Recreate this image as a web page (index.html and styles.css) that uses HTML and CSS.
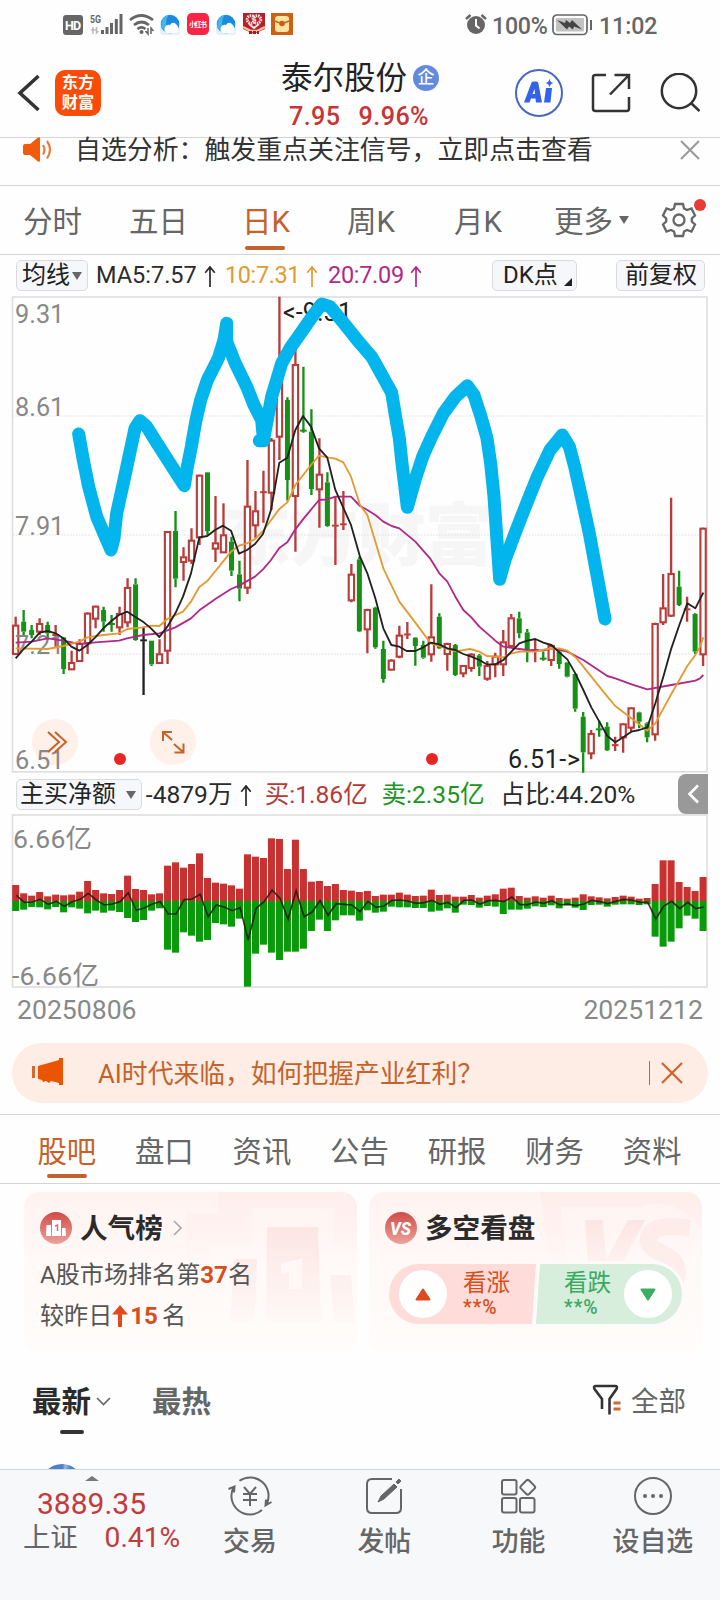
FILE: index.html
```html
<!DOCTYPE html>
<html lang="zh-CN">
<head>
<meta charset="utf-8">
<title>泰尔股份</title>
<link rel="stylesheet" href="styles.css">
</head>
<body>
<div class="app">
  <div class="status">
    <svg class="status-icons" width="240" height="30" viewBox="60 10 240 30">
      <rect x="63" y="15" width="20" height="20" rx="3" fill="#666"/>
      <text x="65" y="29.500" font-size="12.500" font-weight="700" fill="#fff" textLength="16">HD</text>
      <text x="90" y="22.500" font-size="11.500" font-weight="700" fill="#666" textLength="11" lengthAdjust="spacingAndGlyphs">5G</text>
      <path d="M91 30h5M93 27v7M96.500 27v6l2-2" stroke="#bbb" stroke-width="1.500" fill="none"/>
      <g stroke="#666" stroke-width="3"><path d="M102.500 30v4M107 27v7M111.500 23v11M116.300 19v15M121 14v20"/></g>
      <g fill="none" stroke="#666" stroke-width="2.800"><path d="M130 20q11-9 23 0M134 25q7.500-6 15 0M137.500 29q4-3.200 8 0"/></g>
      <circle cx="141.500" cy="32" r="2" fill="#666"/><path d="M148 28v6l-2.500-3M151 34v-6l2.500 3" stroke="#666" stroke-width="1.500" fill="none"/>
      <g id="cloud"><rect x="160" y="24" width="20" height="11" rx="3" fill="#e7f0f8"/><circle cx="170" cy="24" r="9.300" fill="#198be0"/><path d="M161.500 28q-2-10 7-13q-5 8 0 16z" fill="#44b5ef"/><path d="M167 33q-4-2-2-6q2-3 5-2q2-4 6-1q3 3 2 6q1 2-1 3z" fill="#fff"/></g>
      <rect x="187" y="13" width="22" height="22" rx="5" fill="#fb2444"/><text x="189" y="27" font-size="7" font-weight="700" fill="#fff" textLength="18">小红书</text>
      <use href="#cloud" x="56"/>
      <path d="M243 13h22v16l-11 5-11-5z" fill="#b91f2a"/><circle cx="251" cy="19.500" r="3.800" fill="none" stroke="#f5dede" stroke-width="3" stroke-dasharray="1.500 .8"/><circle cx="257" cy="19.500" r="3.800" fill="none" stroke="#f5dede" stroke-width="3" stroke-dasharray="1.500 .8"/><path d="M249 24l5 4 5-4" stroke="#f5dede" stroke-width="2" fill="none"/><path d="M243 27l8 4h6l8-4" stroke="#f3c099" stroke-width="2.500" fill="none"/><path d="M249 32.500h10" stroke="#a31822" stroke-width="3" stroke-dasharray="3 1"/>
      <rect x="271" y="13" width="22" height="22" fill="#cc6114"/><rect x="275" y="16" width="14" height="16" rx="3" fill="#ffe3a4"/><path d="M275 21q7 4 14 0" stroke="#cc6114" stroke-width="1.500" fill="none"/><circle cx="282" cy="23.500" r="2.800" fill="#c95e16"/>
    </svg>
    <svg class="alarm" width="22" height="22" viewBox="0 0 22 22"><circle cx="11" cy="12" r="9" fill="#666"/><path d="M1 6l4.500-4M21 6l-4.500-4" stroke="#666" stroke-width="2.500"/><path d="M11 6v6.500l3.500 3" stroke="#fff" stroke-width="2" fill="none"/></svg>
    <span class="pct">100%</span>
    <svg class="battery" width="41" height="22" viewBox="0 0 41 22"><rect x="1" y="1" width="34" height="19.500" rx="4" fill="none" stroke="#666" stroke-width="1.700"/><rect x="4" y="4" width="28" height="13.500" rx="1" fill="#c2c2c2"/><path d="M5 6l8 3 1-3 4 3 2-3 10 9.500-8-3-1 3-4-3-2 3z" fill="#444"/><path d="M39 6v10" stroke="#666" stroke-width="2"/></svg>
    <span class="clock">11:02</span>
  </div>

  <header class="header">
    <svg class="back" width="24" height="38" viewBox="0 0 24 38"><path d="M21.500 2L3 19l18.500 17" fill="none" stroke="#333" stroke-width="3.600"/></svg>
    <div class="logo"><span>东方</span><span>财富</span></div>
    <div class="stock">
      <div class="stock-name">泰尔股份<span class="corp">企</span></div>
      <div class="stock-price"><span>7.95</span><span>9.96%</span></div>
    </div>
    <svg class="ai" width="50" height="50" viewBox="0 0 50 50"><circle cx="25" cy="25" r="23" fill="#fff" stroke="#4566c4" stroke-width="2"/><path fill-rule="evenodd" d="M10 34.500L17.500 14.500Q18 13.500 19.500 13.500H22.500Q24 13.500 24.300 15L28 34.500H22L21.500 30.500H17L15.500 34.500ZM18.500 26H21L20.500 21Z" fill="#3563e8"/><path d="M32 20h6l-1.500 14.500h-6.500z" fill="#3563e8"/><path d="M35.500 10.500q.6 4 4 4.500q-3.400.5-4 4.500q-.6-4-4-4.500q3.400-.5 4-4.500z" fill="#3563e8"/></svg>
    <svg class="share" width="40" height="40" viewBox="0 0 40 40" fill="none" stroke="#333" stroke-width="2.500"><path d="M15 2H4.500Q2 2 2 4.500v31Q2 38 4.500 38h31q2.500 0 2.500-2.500V24M23.500 2H38v14M38 2L19 21.500"/></svg>
    <svg class="search" width="40" height="40" viewBox="0 0 40 40" fill="none" stroke="#333" stroke-width="2.500"><circle cx="19" cy="18" r="17.200"/><path d="M31 30l8.500 8"/></svg>
  </header>

  <div class="notice">
    <svg width="30" height="26" viewBox="0 0 30 26"><path d="M1 9q0-2 2-2h5l8-6.500q2-1 2 1v22q0 2-2 1L8 18H3q-2 0-2-2z" fill="#f35a0c"/><path d="M21 8q3 4.500 0 9.500M25 4q6 8.500 0 17.500" fill="none" stroke="#e87b3e" stroke-width="2.200"/></svg>
    <span class="notice-text">自选分析：触发重点关注信号，立即点击查看</span>
    <svg class="notice-x" width="20" height="20" viewBox="0 0 20 20"><path d="M1 1l18 18M19 1L1 19" stroke="#999" stroke-width="2"/></svg>
  </div>

  <nav class="periods">
    <span class="p1">分时</span><span class="p2">五日</span><span class="p3 on">日K</span><span class="p4">周K</span><span class="p5">月K</span><span class="p6">更多<i class="tri"></i></span>
    <span class="gear"><svg width="36" height="36" viewBox="-18 -18 36 36" fill="none" stroke="#666" stroke-width="2.300"><path d="M-4-16H4L5-11.500L8-10L12.500-11.500L16-4.500L12.800-1.500V1.500L16 4.500L12.500 11.500L8 10L5 11.500L4 16H-4L-5 11.500L-8 10L-12.500 11.500L-16 4.500L-12.800 1.500V-1.500L-16-4.500L-12.500-11.500L-8-10L-5-11.500Z"/><circle r="5.500"/></svg><i class="dot"></i></span>
  </nav>

  <div class="ma-row">
    <span class="chip chip-ma">均线<i class="tri"></i></span>
    <span class="ma ma5">MA5:7.57<svg class="up" viewBox="0 0 12 22"><path d="M6 22V1M1 7l5-6 5 6"/></svg></span>
    <span class="ma ma10">10:7.31<svg class="up" viewBox="0 0 12 22"><path d="M6 22V1M1 7l5-6 5 6"/></svg></span>
    <span class="ma ma20">20:7.09<svg class="up" viewBox="0 0 12 22"><path d="M6 22V1M1 7l5-6 5 6"/></svg></span>
    <span class="chip chip-dk">DK点<i class="corner"></i></span>
    <span class="chip chip-fq">前复权</span>
  </div>

  <svg class="kline" width="720" height="477" viewBox="0 296 720 477">
    <text x="223" y="560" class="watermark" textLength="270">东方财富</text>
    <rect x="12.500" y="297" width="694.500" height="474.800" fill="none" stroke="#dedede" stroke-width="1.600"/>
    <path d="M13 416H706M13 535H706M13 654H706" stroke="#ddd" stroke-width="1.200" stroke-dasharray="1.500 1.500"/>
    <g class="float"><circle cx="55" cy="742" r="23"/><circle cx="173" cy="742" r="23"/></g>
    <g id="candles"></g>
    <g class="axis"><text x="15" y="322.500">9.31</text><text x="15" y="416">8.61</text><text x="15" y="535">7.91</text><text x="15" y="654">7.21</text><text x="15" y="769">6.51</text></g>
    <g id="averages"></g>
    <g fill="none" stroke="#c5622b" stroke-width="2"><path d="M48 732l11 10-11 10M55 732l11 10-11 10"/><path d="M172 732h-9v9M163 732l9 8M174.500 752.500h9v-9M183 752l-9-8"/></g>
    <circle cx="120" cy="759" r="6" fill="#ea2323"/><circle cx="432" cy="759" r="6" fill="#ea2323"/>
    <text class="mark" x="283" y="321" textLength="69">&lt;-9.31</text>
    <text class="mark" x="508" y="767.500" textLength="72">6.51-&gt;</text>
    <g id="sketch"></g>
  </svg>

  <div class="vol-row">
    <span class="chip chip-vol">主买净额<i class="tri"></i></span>
    <span class="v v1">-4879万<svg class="up" viewBox="0 0 12 22"><path d="M6 22V1M1 7l5-6 5 6"/></svg></span>
    <span class="v v2">买:1.86亿</span>
    <span class="v v3">卖:2.35亿</span>
    <span class="v v4">占比:44.20%</span>
    <span class="drawer"><svg width="12" height="20" viewBox="0 0 12 20"><path d="M11 1.500L2.500 10l8.500 8.500" fill="none" stroke="#fff" stroke-width="2.600"/></svg></span>
  </div>

  <svg class="volume" width="720" height="174" viewBox="0 814 720 174">
    <rect x="12.500" y="815" width="694.500" height="172" fill="none" stroke="#dedede" stroke-width="1.600"/>
    <g id="bars"></g>
    <text class="vlabel" x="13" y="848" textLength="79">6.66亿</text><text class="vlabel" x="12" y="985" textLength="87">-6.66亿</text>
  </svg>
  <div class="dates"><span>20250806</span><span>20251212</span></div>

  <div class="banner">
    <svg width="32" height="28" viewBox="0 0 32 28"><path d="M0 8h3v12H0z" fill="#d5662f"/><path d="M6 8L27 2V0h4v27h-4v-2l-8-2-2 2-3-2-3 1-1-2-4-1z" fill="#ea5504"/></svg>
    <span class="banner-text">AI时代来临，如何把握产业红利？</span>
    <i class="bar"></i>
    <svg width="22" height="22" viewBox="0 0 22 22"><path d="M1 1l20 20M21 1L1 21" stroke="#d0622a" stroke-width="2.200"/></svg>
  </div>

  <nav class="sections"><span class="on">股吧</span><span>盘口</span><span>资讯</span><span>公告</span><span>研报</span><span>财务</span><span>资料</span></nav>

  <div class="cards">
    <section class="card">
      <svg class="card-art" width="333" height="160" viewBox="24 1192 333 160"><defs><linearGradient id="fade" x1="0" y1="0" x2="0" y2="1"><stop offset="0" stop-color="#f9d9d6" stop-opacity=".55"/><stop offset="1" stop-color="#f9d9d6" stop-opacity=".08"/></linearGradient></defs><path d="M218 1192H357V1250L334 1245V1208H252V1247H210V1262H186V1213H218Z" fill="url(#fade)" opacity=".35"/><path d="M267 1227h51l3 96h-55zM234 1259h23l-2 64h-25zM330 1275h21l4 48h-21z" fill="url(#fade)"/><path d="M281 1264l21-6v31h-13v-17l-8 2z" fill="#fff8f6"/></svg>
      <h2><svg width="32" height="32" viewBox="0 0 32 32"><defs><linearGradient id="ball" x1="0" y1="0" x2="0" y2="1"><stop offset="0" stop-color="#cf4c46"/><stop offset="1" stop-color="#eda29c"/></linearGradient></defs><circle cx="16" cy="16" r="16" fill="url(#ball)"/><path d="M12 8h9v16h-9zM6.500 13h4.500v11H6zM22 16h3.500l.5 8h-4z" fill="#fff"/><path d="M15 14l2.500-1v6" stroke="#db6b65" stroke-width="1.500" fill="none"/></svg><span>人气榜</span><svg class="more" width="9" height="16" viewBox="0 0 9 16"><path d="M1 1l7 7-7 7" fill="none" stroke="#aaa" stroke-width="1.700"/></svg></h2>
      <p>A股市场排名第<b>37</b>名</p>
      <p class="second">较昨日<svg width="16" height="22" viewBox="0 0 16 22"><path d="M8 0l8 9.500H10V22H6V9.500H0z" fill="#e24a1b"/></svg><b>15</b><span class="ming">名</span></p>
    </section>
    <section class="card">
      <svg class="card-art" width="333" height="160" viewBox="369 1192 333 160"><path d="M540 1192H702V1230Q672 1193 640 1207H561L568 1260H549Z" fill="url(#fade)" opacity=".4"/><path d="M585 1220h18l3 40 22-40h17l-32 60h-24z" fill="url(#fade)"/><path d="M690 1228Q650 1222 648 1240Q648 1248 664 1254Q684 1264 674 1284" fill="none" stroke="#f9d9d6" stroke-opacity=".35" stroke-width="17"/></svg>
      <h2><svg width="32" height="32" viewBox="0 0 32 32"><circle cx="16" cy="16" r="16" fill="url(#ball)"/><text x="5" y="22.500" font-size="18" font-weight="800" font-style="italic" fill="#fff" textLength="21" lengthAdjust="spacingAndGlyphs">VS</text></svg><span>多空看盘</span></h2>
      <div class="vote">
        <div class="rise"><span class="knob"><svg width="16" height="13" viewBox="0 0 16 13"><path d="M8 1.500L14.500 11.500H1.500z" fill="#dc4b20" stroke="#dc4b20" stroke-width="2" stroke-linejoin="round"/></svg></span><span class="vt">看涨<br><em>**%</em></span></div>
        <div class="fall"><span class="vt">看跌<br><em>**%</em></span><span class="knob"><svg width="16" height="13" viewBox="0 0 16 13"><path d="M8 11.500L14.500 1.500H1.500z" fill="#3cae62" stroke="#3cae62" stroke-width="2" stroke-linejoin="round"/></svg></span></div>
      </div>
    </section>
  </div>

  <div class="feed">
    <span class="newest">最新</span>
    <svg class="chev" width="15" height="9" viewBox="0 0 15 9"><path d="M1 1l6.500 6.500L14 1" fill="none" stroke="#666" stroke-width="1.700"/></svg>
    <span class="hot">最热</span>
    <svg class="funnel" width="30" height="32" viewBox="0 0 30 32" fill="none"><path d="M10 25V15L2.500 5Q1 2 4 2h19q3 0 1.500 3L17.500 15v15.500" stroke="#333" stroke-width="2.600"/><path d="M21.500 19h7M21.500 25h7" stroke="#d1692f" stroke-width="2.800"/></svg>
    <span class="all">全部</span>
  </div>
  <div class="post"><i class="avatar"></i></div>

  <footer class="bottom">
    <div class="index"><i class="caret"></i><div class="idx-value">3889.35</div><div class="idx-row"><span>上证</span><b>0.41%</b></div></div>
    <div class="act"><svg width="44" height="40" viewBox="-22 -20 44 40" fill="none" stroke="#666" stroke-width="2"><path d="M-10.500-15.200A18.500 18.500 0 0 1 16.500 8.500M21.500 6l-6 3.500.5-6M12 14A18.500 18.500 0 0 1-16.500-8.500M-21.500-7l6-2.500-.5 6"/><path d="M-6-9l6 7 6-7M0-2V10M-7-2H7M-7 4H7"/></svg><span>交易</span></div>
    <div class="act"><svg width="40" height="40" viewBox="-20 -20 40 40" fill="none" stroke="#666" stroke-width="2"><path d="M8-17H-12Q-17-17-17-12V12Q-17 17-12 17H12Q17 17 17 12V-7"/><path d="M-6 6L-3 0 10-12 13-9 0 3zM12-14l3-3 2 2-3 3z" fill="#666" stroke-width="1"/></svg><span>发帖</span></div>
    <div class="act"><svg width="40" height="40" viewBox="-20 -20 40 40" fill="none" stroke="#666" stroke-width="2"><rect x="-17" y="-16" width="14.500" height="14.500" rx="2"/><rect x="-17" y="2" width="14.500" height="14.500" rx="2"/><rect x="1" y="2" width="14.500" height="14.500" rx="2"/><rect x="3" y="-14.500" width="11.500" height="11.500" rx="2" transform="rotate(45 8.750 -8.750)"/></svg><span>功能</span></div>
    <div class="act"><svg width="40" height="40" viewBox="-20 -20 40 40"><circle r="18" fill="none" stroke="#666" stroke-width="2"/><g fill="#666"><circle cx="-8" r="2"/><circle r="2"/><circle cx="8" r="2"/></g></svg><span>设自选</span></div>
  </footer>
</div>
<script src="chart.js"></script>
</body>
</html>
```
FILE: styles.css
```css
* { box-sizing: border-box; }
body { margin: 0; background: #fefefe; color: #2b2b2b; font-family: Roboto, "Noto Sans CJK SC", sans-serif; }
svg { display: block; flex: none; }
svg text { font-family: Roboto, "Noto Sans CJK SC", sans-serif; }
i, em { font-style: normal; }
.app { width: 720px; height: 1600px; overflow: hidden; display: flex; flex-direction: column; }
.app > * { flex: none; }

.status { height: 48px; padding: 0 0 0 60px; display: flex; align-items: center; color: #666; font-size: 23.2px; font-weight: 500; line-height: 50px; }
.status-icons { margin-top: 2px; }
.alarm { margin-left: 165px; }
.pct { margin: 3px 0 0 5px; width: 56px; letter-spacing: -.3px; }
.battery { margin: 1px 0 0 4px; }
.clock { margin: 3px 0 0 6px; letter-spacing: -.1px; }

.header { height: 90px; border-bottom: 1px solid #d4d4d4; display: flex; }
.back { margin: 26px 0 0 17px; }
.logo { margin: 22px 0 0 14px; width: 46px; height: 46px; border-radius: 10px; background: #fb4c07; color: #fff; font-size: 16.300px; font-weight: 700; line-height: 20px; padding-top: 3px; display: flex; flex-direction: column; align-items: center; }
.stock { margin-left: 180px; width: 200px; }
.stock-name { font-size: 31.5px; line-height: 40px; margin-top: 11px; display: flex; align-items: center; color: #222; white-space: nowrap; }
.corp { width: 26px; height: 26px; margin: 0 0 3px 6px; border-radius: 50%; background: #628ade; color: #fff; font-size: 17px; line-height: 25px; font-weight: 500; text-align: center; }
.stock-price { display: flex; gap: 18px; margin: 3px 0 0 8px; color: #c73535; font-size: 25.200px; font-weight: 500; line-height: 30px; letter-spacing: .4px; }
.ai { margin: 20px 0 0 33px; }
.share { margin: 25px 0 0 27px; }
.search { margin: 25px 0 0 29px; }

.notice { height: 48px; border-bottom: 1px solid #d4d4d4; display: flex; align-items: flex-start; color: #333; }
.notice svg { margin: -1px 0 0 22px; }
.notice-text { font-size: 25.9px; line-height: 26px; margin: -1px 0 0 23px; width: 530px; white-space: nowrap; }
.notice .notice-x { margin: 2px 0 0 75px; }

.periods { height: 69px; border-bottom: 1px solid #d4d4d4; display: flex; color: #666; font-size: 29.500px; line-height: 70px; white-space: nowrap; }
.periods > span { display: flex; align-items: center; height: 72px; }
.p1 { margin-left: 23px; width: 106px; }
.p2 { width: 113px; }
.p3 { width: 105px; position: relative; }
.p4 { width: 107px; }
.p5 { width: 100px; }
.p6 { width: 107px; }
.on { color: #c5622b; }
.p3.on::after { content: ""; position: absolute; left: 3px; top: 60px; width: 40px; height: 4px; border-radius: 2px; background: #c5622b; }
.tri { display: inline-block; border: 5px solid transparent; border-top: 8px solid #666; border-bottom: 0; }
.p6 .tri { margin: 0 0 4px 6px; }
.periods > .gear { position: relative; height: 68px; }
.dot { position: absolute; left: 33px; top: 13px; width: 12px; height: 12px; border-radius: 50%; background: #ea3a36; }

.ma-row { height: 41px; padding: 5px 0 0 16px; display: flex; font-size: 23.5px; line-height: 31px; white-space: nowrap; }
.chip { height: 31px; border: 1px solid #dadbdd; border-radius: 5px; background: #f6f7fa; font-size: 24px; line-height: 29px; display: flex; align-items: center; color: #222; white-space: nowrap; }
.chip-ma { width: 72px; padding-left: 5px; }
.chip-ma .tri { margin-left: 2px; }
.ma { display: flex; align-items: center; height: 30px; }
.up { width: 12px; height: 21px; margin: 2px 0 0 7px; fill: none; stroke: currentColor; stroke-width: 1.800; }
.ma5 { margin-left: 8px; width: 129px; }
.ma10 { width: 103px; color: #e29b31; letter-spacing: -.4px; }
.ma20 { width: 164px; color: #b22886; letter-spacing: -.3px; }
.ma10 .up, .ma20 .up { margin-left: 6px; }
.chip-dk { width: 85px; padding-left: 10px; position: relative; }
.corner { position: absolute; right: 4px; bottom: 4px; border-left: 8px solid transparent; border-bottom: 8px solid #222; }
.chip-fq { width: 89px; margin-left: 39px; padding-left: 8px; }

.watermark { font-size: 68px; font-weight: 900; fill: #f6f6f6; }
.float circle { fill: #fff0e9; }
.axis text { font-size: 25.300px; fill: #888; }
.mark { font-size: 25px; fill: #222; }
.vlabel { font-size: 26.500px; fill: #888; }

.vol-row { height: 41px; padding: 0 12px 0 16px; display: flex; align-items: flex-start; font-size: 24.6px; line-height: 43px; white-space: nowrap; }
.chip-vol { width: 126px; margin-top: 6px; padding-left: 3px; }
.chip-vol .tri { margin-left: 10px; }
.v { display: flex; align-items: center; height: 43px; }
.v1 { margin-left: 4px; width: 119px; }
.v2 { width: 117px; color: #b33b38; }
.v3 { width: 119px; color: #1d941d; }
.v4 { width: 178px; }
.drawer { width: 30px; height: 40px; margin-top: 1px; border-radius: 8px 0 0 8px; background: #999; display: flex; align-items: center; justify-content: center; }

.dates { height: 55px; padding: 0 17px 0 17px; display: flex; justify-content: space-between; color: #888; font-size: 26.600px; line-height: 44px; }
.banner { margin: 0 12px; height: 60px; border-radius: 30px; background: #fdede4; display: flex; align-items: center; padding-left: 20px; color: #c5622b; }
.banner-text { margin: -3px 0 0 34px; width: 551px; font-size: 25.8px; white-space: nowrap; }
.bar { width: 1px; height: 24px; background: #d0622a; margin-right: 11px; }
.banner svg:first-child { margin-top: -2px; }

.sections { margin-top: 11px; height: 70px; border-top: 1px solid #d4d4d4; border-bottom: 1px solid #d4d4d4; padding: 0 19px 0 18px; display: grid; grid-template-columns: repeat(7, 1fr); text-align: center; color: #666; font-size: 29.400px; line-height: 74px; }
.sections .on { color: #c5622b; position: relative; }
.sections .on::after { content: ""; position: absolute; left: 29px; top: 59px; width: 40px; height: 4px; border-radius: 2px; background: #c5622b; }

.cards { margin-top: 8px; padding: 0 18px 0 24px; display: flex; gap: 12px; }
.card { width: 333px; height: 160px; border-radius: 15px; background: linear-gradient(#fff3f1, #fffaf8 55%, #fffcfb); position: relative; overflow: hidden; padding-left: 16px; }
.card-art { position: absolute; left: 0; top: 0; }
.card > :not(.card-art) { position: relative; }
.card h2 { margin: 20px 0 0; height: 32px; display: flex; align-items: center; font-size: 27.6px; line-height: 32px; color: #2b2b2b; }
.card h2 span { margin: 1px 0 0 8px; }
.more { margin-left: 10px; }
.card p { margin: 13px 0 0; font-size: 24.100px; line-height: 36px; color: #555; height: 36px; display: flex; align-items: center; white-space: nowrap; }
.card p b { color: #d64f20; }
.card .second { margin-top: 5px; }
.second b { margin-left: 2px; }
.ming { margin-left: 4px; }
.vote { margin: 20px 0 0 4px; width: 293px; height: 60px; border-radius: 30px; overflow: hidden; display: flex; box-shadow: 0 0 0 3px #fffafa; }
.vote > div { display: flex; align-items: center; }
.rise { width: 147px; background: #fddcd9; color: #d64f20; padding-left: 10px; clip-path: polygon(0 0, 100% 0, 143px 100%, 0 100%); }
.fall { width: 147px; margin-left: -1px; background: #d7eedd; color: #3aa960; clip-path: polygon(5px 0, 100% 0, 100% 100%, 1px 100%); padding-left: 29px; }
.knob { width: 48px; height: 48px; flex: none; border-radius: 50%; background: #fff; display: flex; align-items: center; justify-content: center; }
.vt { font-size: 23.600px; line-height: 23px; width: 60px; margin-top: 3px; white-space: nowrap; }
.rise .vt { margin-left: 16px; }
.vt em { font-size: 19.500px; font-weight: 500; letter-spacing: 1px; }

.feed { height: 85px; padding-left: 33px; display: flex; align-items: center; position: relative; font-size: 29.500px; line-height: 40px; color: #666; padding-top: 14px; font-weight: 700; white-space: nowrap; }
.newest { color: #2b2b2b; width: 59px; margin-left: -1px; }
.feed::after { content: ""; position: absolute; left: 60px; top: 78px; width: 24px; height: 4px; border-radius: 2px; background: #333; }
.chev { margin-left: 5px; }
.hot { margin-left: 41px; }
.funnel { margin-left: 381px; margin-top: -3px; }
.all { margin-left: 9px; font-size: 27.500px; font-weight: 400; }
.post { height: 32px; overflow: hidden; padding: 27px 0 0 41px; }
.avatar { display: block; width: 42px; height: 42px; border-radius: 50%; background: linear-gradient(100deg, #4e80cf 45%, #9ab8e5 50%, #4e80cf 60%); }

.bottom { height: 131px; border-top: 1px solid #d2d6d8; background: #f7f8fa; display: flex; color: #666; }
.index { width: 183px; position: relative; }
.caret { position: absolute; left: 85px; top: 6px; border: 7px solid transparent; border-bottom: 5px solid #777; border-top: 0; }
.idx-value { margin: 16px 0 0 37px; font-size: 30px; line-height: 36px; color: #c43a3a; }
.idx-row { display: flex; align-items: center; margin: -2px 0 0 23px; font-size: 27.300px; line-height: 36px; white-space: nowrap; }
.idx-row b { font-weight: 400; font-size: 28.200px; color: #c43a3a; margin-left: 27px; }
.act { width: 134.400px; display: flex; flex-direction: column; align-items: center; padding-top: 6px; }
.act span { font-size: 26.900px; line-height: 36px; margin-top: 8px; font-weight: 500; }
```
FILE: chart.js
```js
// Coordinates are stored at 3x resolution and scaled down by the group transforms.
const NS = "http://www.w3.org/2000/svg";
const STEP = 23.98, X0 = 47;
const RED = "#b83c3a", GREEN = "#159115";

function add(parent, tag, attrs) {
  const node = document.createElementNS(NS, tag);
  for (const key in attrs) node.setAttribute(key, attrs[key]);
  parent.appendChild(node);
}

// kind, high, body top, body bottom, low
const candles = `R 560 585 672 672;G 540 575 605 620;G 585 600 615 625;R 565 580 605 615;G 575 585 610 630;R 585 612 618 650;G 622 622 717 732;R 662 697 718 720;R 628 640 693 695;R 547 549 640 672;R 527 528 566 595;G 530 540 575 605;G 555 580 584 605;R 530 550 592 615;R 445 472 577 592;G 445 463 630 632;K 590 628 634 795;G 632 632 703 708;R 628 671 699 700;R 303 304 662 702;G 243 303 446 472;R 352 380 396 452;R 295 330 392 402;R 134 135 322 345;G 127 127 303 315;R 198 338 356 396;R 220 314 367 367;G 320 335 422 438;G 392 433 476 514;R 90 228 473 492;R 183 242 286 325;R 122 185 188 278;R 24 30 188 240;R -400 -160 20 90;G -98 -90 150 212;R -255 -197 198 365;G -190 0 4 8;G -62 5 177 195;R 25 132 178 293;G 127 157 288 290;R 200 284 290 405;R 183 280 286 300;R 402 432 511 517;G 380 388 604 606;R 536 538 598 670;G 530 533 652 656;G 632 657 747 758;R 688 690 719 720;R 587 615 680 685;R 576 611 616 627;G 622 623 648 707;G 632 645 683 686;R 463 620 673 695;G 550 560 655 657;R 638 640 672 722;G 642 645 735 738;R 705 706 730 742;R 670 672 714 725;G 672 676 710 738;R 693 706 746 752;R 668 678 703 742;R 600 635 703 738;R 552 563 648 650;G 545 565 610 625;G 597 607 662 697;R 630 657 663 697;G 665 684 688 692;R 643 646 690 708;G 660 665 702 716;G 697 697 740 742;G 730 732 836 845;G 846 860 967 1028;R 900 910 970 988;G 872 896 900 920;G 877 890 961 963;R 920 943 948 963;R 880 881 922 968;R 832 833 893 905;G 845 847 875 895;G 877 880 922 937;R 578 580 913 932;R 432 533 577 585;R 203 430 557 560;G 422 470 525 528;R 500 535 541 575;G 550 552 665 672;R 293 294 673 708`;

const candleLayer = document.getElementById("candles");
candleLayer.setAttribute("transform", "translate(0 430) scale(.33333)");
candles.split(";").forEach((row, i) => {
  const parts = row.split(" ");
  const [high, top, bottom, low] = parts.slice(1).map(Number);
  const x = X0 + STEP * i;
  const color = { R: RED, G: GREEN, K: "#222" }[parts[0]];
  add(candleLayer, "path", { d: `M${x} ${high}V${top}M${x} ${bottom}V${low}`, stroke: color, "stroke-width": 7 });
  if (bottom - top < 8) {
    add(candleLayer, "path", { d: `M${x - 10} ${(top + bottom) / 2}H${x + 10}`, stroke: color, "stroke-width": 6 });
    add(candleLayer, "path", { d: `M${x} ${top}V${bottom}`, stroke: color, "stroke-width": 7 });
  } else if (parts[0] === "R") {
    add(candleLayer, "rect", { x: x - 8, y: top + 2, width: 16, height: bottom - top - 2, fill: "#fefefe", stroke: color, "stroke-width": 6.3 });
  } else {
    add(candleLayer, "rect", { x: x - 7.5, y: top, width: 15, height: bottom - top, fill: color });
  }
});

const averages = [
  ["#b22886", "47,638 95,635 143,625 190,632 238,642 286,637 357,632 381,625 429,615 478,610 526,592 573,565 598,541 645,508 693,477 717,467 765,440 789,418 813,390 838,354 862,337 886,298 909,268 957,210 982,208 1006,200 1053,200 1080,228 1102,240 1126,255 1150,275 1175,288 1198,295 1246,335 1290,385 1318,430 1342,455 1366,500 1390,540 1414,562 1438,590 1486,632 1510,650 1558,657 1582,660 1630,662 1654,655 1702,665 1750,690 1822,738 1846,745 1895,763 1942,778 2014,765 2086,752 2100,745 2110,735"],
  ["#e29b31", "47,655 143,657 190,648 238,635 262,622 310,615 357,610 382,597 429,592 453,587 478,588 502,567 549,545 573,515 598,471 622,453 669,395 693,365 717,347 741,340 765,327 789,303 838,237 862,217 886,165 933,105 957,77 982,82 1006,86 1030,97 1053,140 1080,225 1102,255 1150,415 1198,515 1246,578 1270,610 1292,640 1340,655 1366,664 1410,657 1438,665 1460,678 1486,680 1510,682 1534,670 1560,665 1606,665 1640,657 1678,655 1702,662 1730,685 1774,740 1822,800 1846,828 1894,865 1942,902 1966,880 2014,792 2062,708 2086,675 2100,650 2110,622"],
  ["#222", "47,685 71,657 95,635 119,608 143,603 167,610 190,625 214,650 238,662 262,645 286,622 310,595 334,573 357,555 382,545 405,560 429,575 453,595 478,621 502,590 526,550 549,500 573,430 598,322 622,318 645,300 669,287 693,302 717,371 741,360 765,342 789,312 813,240 838,98 862,83 886,0 909,-42 933,-10 957,55 982,83 1006,180 1053,285 1080,380 1102,430 1126,505 1150,595 1174,645 1198,650 1220,663 1246,663 1270,652 1292,638 1318,643 1342,655 1366,660 1390,672 1414,680 1438,690 1460,703 1486,703 1510,690 1534,665 1558,640 1582,632 1606,627 1630,638 1654,645 1678,667 1702,688 1726,730 1750,780 1774,832 1798,875 1822,918 1846,937 1870,922 1894,905 1918,900 1942,892 1966,820 1990,740 2014,655 2038,585 2062,520 2086,535 2110,488"]
];
const averageLayer = document.getElementById("averages");
averageLayer.setAttribute("transform", "translate(0 430) scale(.33333)");
averages.forEach(([stroke, points]) => add(averageLayer, "polyline", { points, stroke, fill: "none", "stroke-width": 5.5, "stroke-linejoin": "round" }));

const sketchLayer = document.getElementById("sketch");
sketchLayer.setAttribute("transform", "translate(0 430) scale(.33333)");
add(sketchLayer, "polyline", {
  points: "236,12 250,90 266,170 290,260 318,325 333,360 342,325 350,250 372,150 405,-5 420,-28 440,-10 465,30 500,85 553,167 562,110 574,50 588,-30 602,-90 622,-150 655,-215 672,-270 680,-320 680,-265 706,-200 740,-130 762,-75 785,-30 790,25 778,32 790,32 800,-20 815,-100 845,-200 870,-245 905,-295 940,-345 965,-378 990,-370 1030,-322 1080,-260 1115,-220 1140,-175 1175,-112 1185,-50 1198,25 1206,100 1222,232 1245,150 1268,80 1295,20 1330,-50 1365,-98 1402,-133 1422,-105 1443,-40 1461,25 1472,100 1482,200 1499,448 1515,390 1545,310 1580,220 1610,145 1650,60 1687,15 1708,50 1724,110 1744,200 1768,310 1790,430 1815,567",
  fill: "none", stroke: "#02b6ed", "stroke-width": 39, "stroke-linecap": "round", "stroke-linejoin": "round"
});

const bars = "345,423 370,419 377,411 366,412 379,418 374,411 376,427 374,412 365,416 333,430 360,422 370,428 372,422 360,426 317,444 357,456 360,450 373,422 370,415 287,539 277,548 293,487 282,497 250,515 324,510 338,459 341,463 346,470 356,446 253,650 260,551 264,524 205,548 207,570 297,545 209,545 297,536 335,483 333,449 348,483 342,451 360,436 362,436 366,452 363,421 378,428 374,425 374,410 368,412 374,412 378,414 377,414 359,425 375,422 374,415 380,428 380,404 375,405 383,413 377,408 373,410 356,432 353,419 378,419 383,416 379,409 383,411 377,406 384,415 386,407 383,413 373,420 379,405 382,404 385,410 381,404 377,403 380,403 386,405 384,403 342,500 271,530 271,515 336,475 351,437 363,446 321,483";
const net = [376,397,396,388,403,394,409,395,388,370,390,405,402,395,368,421,414,402,395,432,432,389,387,373,440,405,411,422,413,510,415,395,360,385,447,362,440,426,392,436,401,403,405,425,394,412,408,391,390,393,400,398,391,403,397,413,391,390,403,392,391,395,381,404,404,396,400,392,405,402,407,402,391,395,401,394,388,390,397,397,447,408,394,416,397,416,411];
const barLayer = document.getElementById("bars");
barLayer.setAttribute("transform", "translate(0 770) scale(.33333)");
bars.split(" ").forEach((row, i) => {
  const [top, bottom] = row.split(",").map(Number);
  const x = X0 + STEP * i - 10.5;
  add(barLayer, "rect", { x, y: top, width: 21, height: 393 - top, fill: "#c93130" });
  add(barLayer, "rect", { x, y: 393, width: 21, height: bottom - 393, fill: "#0a990a" });
});
add(barLayer, "polyline", { points: net.map((v, i) => `${X0 + 2 + STEP * i},${v}`).join(" "), fill: "none", stroke: "#1f1a10", "stroke-opacity": .85, "stroke-width": 5 });
```
